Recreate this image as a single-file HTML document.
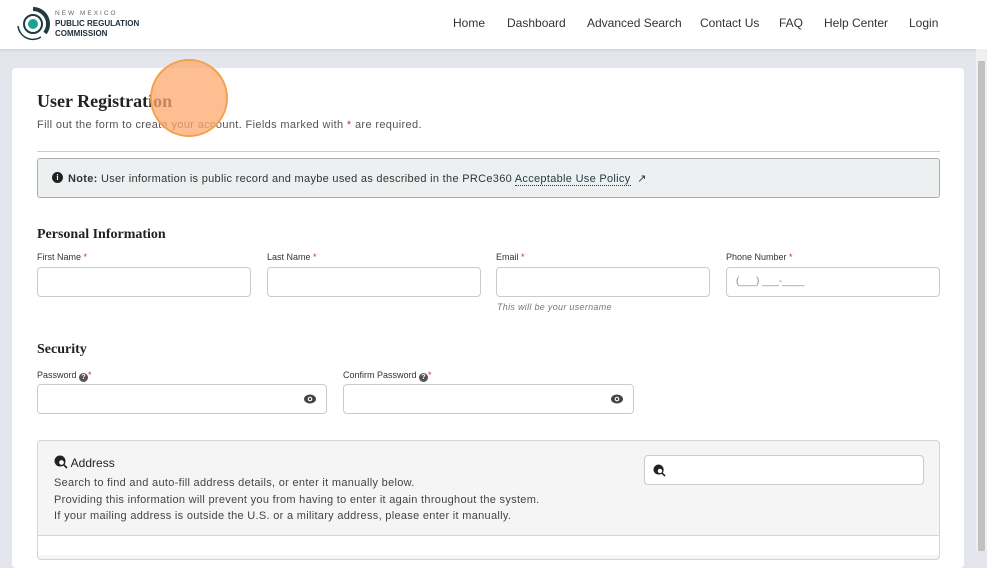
<!DOCTYPE html>
<html><head><meta charset="utf-8"><style>
*{box-sizing:border-box;margin:0;padding:0}
body{width:987px;height:551px;overflow:hidden;background:#e3e7ed;font-family:"Liberation Sans",sans-serif;color:#333;position:relative}
.hdr{position:absolute;left:0;top:0;width:987px;height:49px;background:#fff;box-shadow:0 1px 3px rgba(0,0,0,.12)}
.nav{position:absolute;top:16px;font-size:12px;color:#333}
.card{position:absolute;left:12px;top:68px;width:952px;height:500px;background:#fff;border-radius:4px}
.abs{position:absolute}
.serif{font-family:"Liberation Serif",serif;font-weight:bold;color:#222}
.lbl{position:absolute;font-size:9px;color:#333}
.req{color:#c0392b}
.inp{position:absolute;height:30px;border:1px solid #c8ccd1;border-radius:4px;background:#fff}
.sb{position:absolute;left:976px;top:49px;width:11px;height:502px;background:#f0f0f0}
.q{display:inline-block;width:9px;height:9px;border-radius:50%;background:#555;color:#fff;font-size:7px;font-weight:bold;text-align:center;line-height:9px;vertical-align:-1px}
.eye{position:absolute;right:10px;top:9px}
</style></head><body>
<div class="hdr">
<svg class="abs" style="left:15px;top:6px" width="36" height="36" viewBox="0 0 36 36">
<path d="M18 3 A15 15 0 0 1 30 27" stroke="#1f3b3f" stroke-width="4" fill="none"/>
<path d="M26 31 A15 15 0 0 1 3 20" stroke="#1f3b3f" stroke-width="1.5" fill="none"/>
<circle cx="18" cy="18" r="9" stroke="#1f3b3f" stroke-width="2" fill="none"/>
<circle cx="18" cy="18" r="5" fill="#1aa394"/></svg>
<div class="abs" style="left:55px;top:10px;font-size:6.5px;letter-spacing:2px;color:#666">NEW MEXICO</div>
<div class="abs" style="left:55px;top:19px;font-size:8px;font-weight:bold;color:#1f2f38;line-height:10px">PUBLIC REGULATION<br>COMMISSION</div>
<span class="nav" style="left:453px">Home</span>
<span class="nav" style="left:507px">Dashboard</span>
<span class="nav" style="left:587px">Advanced Search</span>
<span class="nav" style="left:700px">Contact Us</span>
<span class="nav" style="left:779px">FAQ</span>
<span class="nav" style="left:824px">Help Center</span>
<span class="nav" style="left:909px">Login</span>
</div>
<div class="sb"><div style="position:absolute;left:2px;top:12px;width:7px;height:490px;background:#c1c1c1"></div></div>
<div class="card"></div>
<div class="abs serif" style="left:37px;top:91px;font-size:18px">User Registration</div>
<div class="abs" style="left:37px;top:119px;font-size:11px;letter-spacing:.35px;color:#555">Fill out the form to create your account. Fields marked with <span class="req">*</span> are required.</div>
<div class="abs" style="left:37px;top:151px;width:903px;height:1px;background:#ccc"></div>
<div class="abs" style="left:37px;top:158px;width:903px;height:40px;background:#edf0f1;border:1px solid #a8b0b4;border-radius:3px"></div>
<div class="abs" style="left:52px;top:172px;width:11px;height:11px;border-radius:50%;background:#222;color:#fff;font-size:8px;font-weight:bold;text-align:center;line-height:11px">i</div>
<div class="abs" style="left:68px;top:172px;font-size:11px;letter-spacing:.3px;color:#333"><b>Note:</b> User information is public record and maybe used as described in the PRCe360 <span style="border-bottom:1px dotted #333;color:#1f3b3f">Acceptable Use Policy</span> &nbsp;&#x2197;</div>
<div class="abs serif" style="left:37px;top:227px;font-size:14px">Personal Information</div>
<div class="lbl" style="left:37px;top:252px">First Name <span class="req">*</span></div>
<div class="lbl" style="left:267px;top:252px">Last Name <span class="req">*</span></div>
<div class="lbl" style="left:496px;top:252px">Email <span class="req">*</span></div>
<div class="lbl" style="left:726px;top:252px">Phone Number <span class="req">*</span></div>
<div class="inp" style="left:37px;top:267px;width:214px"></div>
<div class="inp" style="left:267px;top:267px;width:214px"></div>
<div class="inp" style="left:496px;top:267px;width:214px"></div>
<div class="inp" style="left:726px;top:267px;width:214px"><span style="position:absolute;left:9px;top:8px;font-size:10px;color:#888">(___) ___-____</span></div>
<div class="abs" style="left:497px;top:302px;font-size:9px;letter-spacing:.3px;font-style:italic;color:#777">This will be your username</div>
<div class="abs serif" style="left:37px;top:342px;font-size:14px">Security</div>
<div class="lbl" style="left:37px;top:370px">Password <span class="q">?</span><span class="req">*</span></div>
<div class="lbl" style="left:343px;top:370px">Confirm Password <span class="q">?</span><span class="req">*</span></div>
<div class="inp" style="left:37px;top:384px;width:290px"><svg class="eye" width="12" height="10" viewBox="0 0 12 10"><ellipse cx="6" cy="5" rx="6" ry="4.5" fill="#444"/><circle cx="6" cy="5" r="2.3" fill="#fff"/><circle cx="6" cy="5" r="1.2" fill="#444"/></svg></div>
<div class="inp" style="left:343px;top:384px;width:291px"><svg class="eye" width="12" height="10" viewBox="0 0 12 10"><ellipse cx="6" cy="5" rx="6" ry="4.5" fill="#444"/><circle cx="6" cy="5" r="2.3" fill="#fff"/><circle cx="6" cy="5" r="1.2" fill="#444"/></svg></div>
<div class="abs" style="left:37px;top:440px;width:903px;height:120px;background:#f5f5f5;border:1px solid #d5d5d5;border-radius:4px"></div>
<div class="abs" style="left:38px;top:535px;width:901px;height:20px;background:#fff;border-top:1px solid #d5d5d5"></div>
<div class="abs" style="left:54px;top:455px;font-size:12px;color:#222"><svg width="14" height="14" viewBox="0 0 14 14" style="vertical-align:-2px"><circle cx="6" cy="6" r="5.5" fill="#222"/><circle cx="7.5" cy="7.5" r="3" fill="#fff" stroke="#222" stroke-width="1.3"/><path d="M9.5 9.5 L13 13" stroke="#222" stroke-width="1.6"/></svg> Address</div>
<div class="abs" style="left:54px;top:475px;font-size:11px;letter-spacing:.3px;line-height:16.5px;color:#444">Search to find and auto-fill address details, or enter it manually below.<br>Providing this information will prevent you from having to enter it again throughout the system.<br>If your mailing address is outside the U.S. or a military address, please enter it manually.</div>
<div class="inp" style="left:644px;top:455px;width:280px"><svg style="position:absolute;left:8px;top:8px" width="13" height="13" viewBox="0 0 14 14"><circle cx="6" cy="6" r="5.5" fill="#222"/><circle cx="7.5" cy="7.5" r="3" fill="#fff" stroke="#222" stroke-width="1.3"/><path d="M9.5 9.5 L13 13" stroke="#222" stroke-width="1.6"/></svg></div>
<div class="abs" style="left:150px;top:59px;width:78px;height:78px;border-radius:50%;background:rgba(252,170,110,.75);border:2px solid #f5a050"></div>
</body></html>
